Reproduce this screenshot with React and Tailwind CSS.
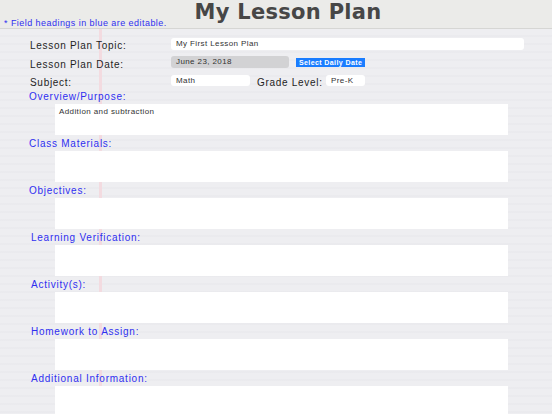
const sections = [
  { label: 'Overview/Purpose:', text: 'Addition and subtraction', pad: 'pl-[29px]' },
  { label: 'Class Materials:', text: '', pad: 'pl-[29px]' },
  { label: 'Objectives:', text: '', pad: 'pl-[29px]' },
  { label: 'Learning Verification:', text: '', pad: 'pl-[31px]' },
  { label: 'Activity(s):', text: '', pad: 'pl-[31px]' },
  { label: 'Homework to Assign:', text: '', pad: 'pl-[31px]' },
  { label: 'Additional Information:', text: '', pad: 'pl-[31px]' },
]

function Field({ children, className = '' }) {
  return (
    <div className={`h-[12px] bg-white rounded-[3px] flex items-center pl-[5px] text-[8px] tracking-[0.4px] text-[#333] ${className}`}>
      {children}
    </div>
  )
}

export default function App() {
  return (
    <div className="w-[552px] h-[414px] overflow-hidden flex flex-col font-['Liberation_Sans',Arial,sans-serif] bg-[#ededf0]">
      <div className="h-[29px] shrink-0 bg-[#ebebe9] border-b border-[#d6d6d4] flex flex-col">
        <div className="pl-[24px] pt-[1px] text-center text-[21px] leading-[22px] font-bold text-[#474747] tracking-[0.3px] font-['DejaVu_Sans',sans-serif]">
          My Lesson Plan
        </div>
        <div className="-mt-[5px] pl-[4px] text-[9px] leading-[10px] tracking-[0.45px] text-[#3030f0]">
          * Field headings in blue are editable.
        </div>
      </div>

      <div className="flex-1 flex flex-col bg-[linear-gradient(to_right,transparent_99px,#f3dbe0_99px,#f3dbe0_102px,transparent_102px),repeating-linear-gradient(to_bottom,#eeeef1_0px,#eeeef1_6px,#e7e7eb_7px,#eeeef1_8px)]">
        <div className="pl-[30px] pt-[9px] flex flex-col text-[10px] tracking-[0.7px] text-[#1e1e1e]">
          <div className="flex items-center h-[12px]">
            <div className="w-[141px] pt-[3px]">Lesson Plan Topic:</div>
            <Field className="w-[353px]">My First Lesson Plan</Field>
          </div>
          <div className="flex items-center h-[12px] mt-[6px]">
            <div className="w-[141px] pt-[4px]">Lesson Plan Date:</div>
            <Field className="w-[118px] bg-[#d2d2d4]! pb-[1px]">June 23, 2018</Field>
            <div className="ml-[7px] h-[9px] px-[3px] bg-[#1a7dff] text-white font-bold text-[7px] leading-[9px] tracking-[0.4px]">
              Select Daily Date
            </div>
          </div>
          <div className="flex items-center h-[11px] mt-[7px]">
            <div className="w-[141px] pt-[4px]">Subject:</div>
            <Field className="w-[79px] h-[11px]!">Math</Field>
            <div className="ml-[7px] w-[69px] pt-[4px]">Grade Level:</div>
            <Field className="w-[39px] h-[11px]!">Pre-K</Field>
          </div>
        </div>

        <div className="mt-[2px] flex flex-col">
          {sections.map((s) => (
            <div key={s.label} className="flex flex-col">
              <div className={`h-[16px] flex items-center ${s.pad} text-[10px] tracking-[0.75px] text-[#2f2ff0]`}>
                {s.label}
              </div>
              <div className="flex">
                <div className="ml-[55px] w-[453px] h-[31px] bg-white pl-[4px] pt-[2px] text-[8px] tracking-[0.4px] text-[#333]">
                  {s.text}
                </div>
              </div>
            </div>
          ))}
        </div>
      </div>
    </div>
  )
}
